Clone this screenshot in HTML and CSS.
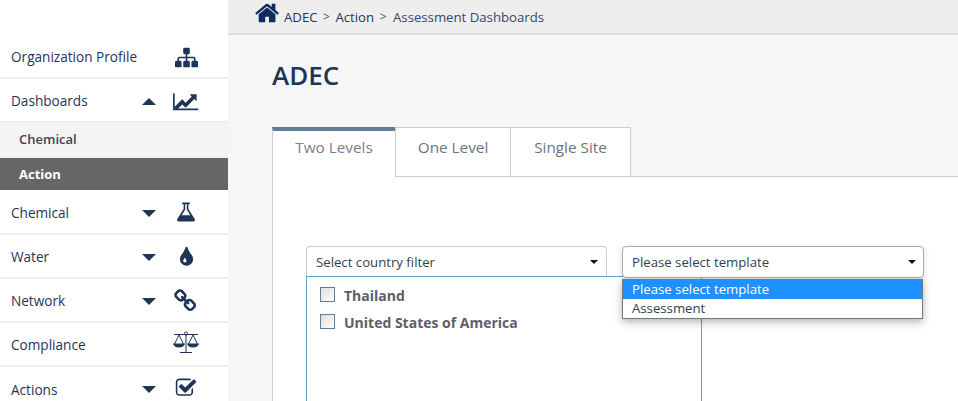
FILE: index.html
```html
<!DOCTYPE html>
<html lang="en">
<head>
  <meta charset="UTF-8" />
  <title>Assessment Dashboards - ADEC</title>
  <link rel="stylesheet" href="styles.css">
</head>
<body>

<div class="sidebar">
  <div class="side-row">
    <span class="side-label">Organization Profile</span>
    <span class="caret"></span>
    <span class="side-icon"><svg width="23" height="23" viewBox="0 0 1792 1792"><path d="M1792 1248v320q0 40-28 68t-68 28h-320q-40 0-68-28t-28-68v-320q0-40 28-68t68-28h96v-192h-512v192h96q40 0 68 28t28 68v320q0 40-28 68t-68 28h-320q-40 0-68-28t-28-68v-320q0-40 28-68t68-28h96v-192h-512v192h96q40 0 68 28t28 68v320q0 40-28 68t-68 28h-320q-40 0-68-28t-28-68v-320q0-40 28-68t68-28h96v-192q0-52 38-90t90-38h512v-192h-96q-40 0-68-28t-28-68v-320q0-40 28-68t68-28h320q40 0 68 28t28 68v320q0 40-28 68t-68 28h-96v192h512q52 0 90 38t38 90v192h96q40 0 68 28t28 68z"/></svg></span>
  </div>
  <div class="side-row">
    <span class="side-label">Dashboards</span>
    <span class="caret caret-up"></span>
    <span class="side-icon"><svg width="27" height="24" viewBox="0 0 2048 1792"><path d="M1920 1472v128h-1920v-1280h128v1152h1792zm-128-1056v435q0 21-19.500 29.500t-35.500-7.500l-121-121-633 633q-10 10-23 10t-23-10l-233-233-416 416-192-192 585-585q10-10 23-10t23 10l233 233 464-464-121-121q-16-16-7.500-35.500t29.500-19.500h435q14 0 23 9t9 23z"/></svg></span>
  </div>
  <div class="sub-row">Chemical</div>
  <div class="sub-row sub-active">Action</div>
  <div class="side-row">
    <span class="side-label">Chemical</span>
    <span class="caret caret-down"></span>
    <span class="side-icon icon-up2"><svg width="22" height="22" viewBox="0 0 1792 1792"><path d="M1591 1448q56 89 21.500 152.500t-140.500 63.500h-1152q-106 0-140.500-63.500t21.500-152.500l503-793v-399h-64q-26 0-45-19t-19-45 19-45 45-19h512q26 0 45 19t19 45-19 45-45 19h-64v399zm-779-725l-272 429h712l-272-429-20-31v-436h-128v436z"/></svg></span>
  </div>
  <div class="side-row">
    <span class="side-label">Water</span>
    <span class="caret caret-down"></span>
    <span class="side-icon"><svg width="23" height="23" viewBox="0 0 1792 1792"><path d="M896 1152q0-36-20-69-1-1-15.500-22.500t-25.500-38-25-44-21-50.500q-4-16-21-16t-21 16q-7 23-21 50.500t-25 44-25.500 38-15.500 22.500q-20 33-20 69 0 53 37.500 90.500t90.500 37.500 90.500-37.500 37.500-90.500zm512-128q0 212-150 362t-362 150-362-150-150-362q0-145 81-275 6-9 62.500-90.500t101-151 99.500-178 83-201.500q9-30 34-47t51-17 51.500 17 33.500 47q28 93 83 201.500t99.500 178 101 151 62.500 90.500q81 127 81 275z"/></svg></span>
  </div>
  <div class="side-row">
    <span class="side-label">Network</span>
    <span class="caret caret-down"></span>
    <span class="side-icon"><svg width="24" height="24" viewBox="0 0 1792 1792"><path d="M1456 1216q0-40-28-68l-208-208q-28-28-68-28-42 0-72 32 3 3 19 18.500t21.500 21.500 15 19 13 25.500 3.500 27.500q0 40-28 68t-68 28q-15 0-27.500-3.500t-25.500-13-19-15-21.500-21.500-18.500-19q-33 31-33 73 0 40 28 68l206 207q27 27 68 27 40 0 68-26l147-146q28-28 28-67zm-703-705q0-40-28-68l-206-207q-28-28-68-28-39 0-68 27l-147 146q-28 28-28 67 0 40 28 68l208 208q27 27 68 27 42 0 72-31-3-3-19-18.500t-21.500-21.500-15-19-13-25.500-3.500-27.500q0-40 28-68t68-28q15 0 27.500 3.500t25.500 13 19 15 21.500 21.500 18.500 19q33-31 33-73zm895 705q0 120-85 203l-147 146q-83 83-203 83-121 0-204-85l-206-207q-83-83-83-203 0-123 88-209l-88-88q-86 88-208 88-120 0-204-84l-208-208q-84-84-84-204t85-203l147-146q83-83 203-83 121 0 204 85l206 207q83 83 83 203 0 123-88 209l88 88q86-88 208-88 120 0 204 84l208 208q84 84 84 204z"/></svg></span>
  </div>
  <div class="side-row">
    <span class="side-label">Compliance</span>
    <span class="caret"></span>
    <span class="side-icon icon-up"><svg width="28" height="23" viewBox="0 0 28 23"><path class="thin" d="M14 3v18M8 21.500h12M2 3.500h24M7 4L2.500 13M7 4l4.500 9M21 4l-4.500 9M21 4l4.500 9"/><circle class="thin" cx="14" cy="2.500" r="1.500" fill="white"/><path d="M1 12.500h12q-1 4-6 4t-6-4zM15 12.500h12q-1 4-6 4t-6-4z"/></svg></span>
  </div>
  <div class="side-row side-last">
    <span class="side-label">Actions</span>
    <span class="caret caret-down"></span>
    <span class="side-icon"><svg width="22" height="22" viewBox="0 0 1792 1792"><path d="M1472 930v318q0 119-84.500 203.500t-203.500 84.500h-832q-119 0-203.500-84.500t-84.500-203.500v-832q0-119 84.500-203.500t203.500-84.500h832q63 0 117 25 15 7 18 23 3 17-9 29l-49 49q-10 10-23 10-3 0-9-2-23-6-45-6h-832q-66 0-113 47t-47 113v832q0 66 47 113t113 47h832q66 0 113-47t47-113v-254q0-13 9-22l64-64q10-10 23-10 6 0 12 3 20 8 20 29zm231-489l-814 814q-24 24-57 24t-57-24l-430-430q-24-24-24-57t24-57l110-110q24-24 57-24t57 24l263 263 647-647q24-24 57-24t57 24l110 110q24 24 24 57t-24 57z"/></svg></span>
  </div>
</div>

<div class="main">
  <div class="crumbs">
    <svg class="home" width="26" height="26" viewBox="0 0 1792 1792"><path d="M1408 992v480q0 26-19 45t-45 19h-384v-384h-256v384h-384q-26 0-45-19t-19-45v-480q0-1 .5-3t.5-3l575-474 575 474q1 2 1 6zm223-69l-62 74q-8 9-21 11h-3q-13 0-21-7l-692-577-692 577q-12 8-24 7-13-2-21-11l-62-74q-8-10-7-23.500t11-21.500l719-599q32-26 76-26t76 26l244 204v-195q0-14 9-23t23-9h192q14 0 23 9t9 23v408l219 182q10 8 11 21.500t-7 23.500z"/></svg>
    <span>ADEC</span>
    <span class="sep">&gt;</span>
    <span>Action</span>
    <span class="sep">&gt;</span>
    <span class="crumb-last">Assessment Dashboards</span>
  </div>

  <h1 class="title">ADEC</h1>

  <div class="tabs">
    <div class="tab tab-active">Two Levels</div>
    <div class="tab tab-two">One Level</div>
    <div class="tab tab-three">Single Site</div>
  </div>

  <div class="panel">
    <div class="filters">
      <div class="select select-country">
        <span>Select country filter</span>
        <span class="select-arrow"></span>
      </div>
      <div class="select select-template">
        <span>Please select template</span>
        <span class="select-arrow"></span>
        <ul class="options">
          <li class="option-on">Please select template</li>
          <li>Assessment</li>
        </ul>
      </div>
    </div>
    <div class="country-list">
      <label class="country"><span class="check"></span>Thailand</label>
      <label class="country"><span class="check"></span>United States of America</label>
    </div>
  </div>
</div>

</body>
</html>
```

FILE: styles.css
```css
html, body {
  height: 100%;
}

body {
  margin: 0;
  display: flex;
  height: 401px;
  overflow: hidden;
  font-family: "Open Sans", Arial, sans-serif;
  font-size: 13.600px;
  color: #1f3557;
  background: #f6f6f6;
}

.sidebar {
  box-sizing: border-box;
  width: 228px;
  height: 401px;
  flex: none;
  padding-top: 35px;
  overflow: hidden;
  background: white;
}

.side-row {
  display: flex;
  align-items: center;
  box-sizing: border-box;
  height: 44px;
  padding: 2px 0 0 11px;
  border-bottom: 2px solid #eeeeee;
}

/* last row is cut by the window, keep its text on the same line as the others */
.side-last {
  height: 34px;
  padding-top: 0;
  align-items: flex-start;
  border-bottom: none;
}

.side-last .side-label {
  margin-bottom: 0;
  padding-top: 13px;
}

.side-last .caret {
  margin-top: 19px;
}

.side-last .side-icon {
  padding-top: 10px;
}

.side-label {
  flex: 1;
  margin-bottom: 2px;
}

.caret {
  width: 0;
  height: 0;
  margin-right: 16px;
  border-left: 7px solid transparent;
  border-right: 7px solid transparent;
}

.caret-up {
  border-bottom: 7px solid #1f3557;
}

.caret-down {
  border-top: 7px solid #1f3557;
}

.side-icon {
  display: flex;
  justify-content: center;
  width: 28px;
  margin-right: 28px;
}

.side-icon svg {
  fill: #1f3557;
}

.icon-up {
  margin-top: -5px;
}

.icon-up2 {
  margin-top: -2px;
}

.thin {
  fill: none;
  stroke: #1f3557;
  stroke-width: 1;
}

.sub-row {
  height: 34px;
  line-height: 33px;
  padding-left: 19px;
  background: #f4f4f4;
  border-bottom: 1px solid #eeeeee;
  font-size: 13px;
  font-weight: 600;
  color: #3d4650;
}

.sub-active {
  height: 32px;
  line-height: 32px;
  margin-bottom: 1px;
  background: #666666;
  color: white;
  font-weight: 700;
  border-bottom: none;
}

.main {
  flex: 1;
  min-width: 0;
}

.crumbs {
  display: flex;
  align-items: center;
  gap: 5.500px;
  height: 33px;
  padding-left: 27px;
  background: #eeeeee;
  border-bottom: 2px solid #dddddd;
  font-size: 13.200px;
}

.home {
  fill: #0f2b5c;
  margin-top: -7px;
  margin-right: -2.500px;
}

.sep {
  font-size: 12px;
  color: #555555;
}

.crumb-last {
  margin-left: 1px;
  color: #3a4666;
}

.title {
  margin: 0;
  padding: 22px 0 0 44px;
  height: 70px;
  font-size: 26px;
  font-weight: 600;
  line-height: 36px;
  color: #1f3557;
}

.tabs {
  display: flex;
  margin-left: 44px;
  height: 50px;
  border-bottom: 1px solid #cccccc;
  box-sizing: border-box;
}

.tab {
  box-sizing: border-box;
  height: 50px;
  padding-top: 9px;
  text-align: center;
  font-size: 15.300px;
  color: #6b7480;
  background: white;
  border: 1px solid #cccccc;
  border-left: none;
}

.tab-active {
  width: 123px;
  height: 51px;
  border-left: 1px solid #cccccc;
  border-top: 4px solid #5f7d99;
  border-right: none;
  border-bottom: none;
  padding-top: 6px;
  color: #78808c;
}

.tab-two {
  width: 116px;
  border-left: 1px solid #cccccc;
}

.tab-three {
  width: 120px;
}

.panel {
  height: 224px;
  margin-left: 44px;
  padding: 69px 0 0 33px;
  box-sizing: border-box;
  background: white;
  border-left: 1px solid #cccccc;
}

.filters {
  display: flex;
  gap: 15px;
}

.select {
  display: flex;
  align-items: center;
  justify-content: space-between;
  box-sizing: border-box;
  height: 32px;
  padding: 0 10px 0 9px;
  background: white;
  border: 1px solid #cccccc;
  border-radius: 4px;
  font-size: 13.200px;
  color: #333f4d;
}

.select-country {
  width: 301px;
  padding-bottom: 1px;
  border-bottom: none;
  border-radius: 4px 4px 0 0;
}

.select-template {
  position: relative;
  width: 302px;
  z-index: 2;
  border-color: #aaaaaa;
  box-shadow: 0 2px 6px rgba(0,0,0,0.15);
}

.select-arrow {
  width: 0;
  height: 0;
  margin-right: -2px;
  border-left: 4px solid transparent;
  border-right: 4px solid transparent;
  border-top: 4px solid #111111;
}

.select-template .select-arrow {
  margin-right: -3px;
}

.options {
  position: absolute;
  top: 32px;
  left: -1px;
  width: 301px;
  margin: 0;
  padding: 0;
  box-sizing: border-box;
  list-style: none;
  background: white;
  border: 1px solid #777777;
  box-shadow: 0 3px 8px rgba(0,0,0,0.3);
}

.options li {
  height: 19px;
  line-height: 19px;
  padding-left: 9px;
}

.options .option-on {
  background: #1e90ff;
  color: white;
}

.country-list {
  position: relative;
  width: 396px;
  height: 125px;
  margin-top: -2px;
  padding-top: 5px;
  box-sizing: border-box;
  background: white;
  border: 1px solid #5ba3c9;
  border-bottom: none;
}

.country {
  display: flex;
  align-items: center;
  height: 27px;
  padding-left: 13px;
  font-size: 14px;
  font-weight: 700;
  color: #5c6068;
}

.check {
  box-sizing: border-box;
  width: 15px;
  height: 15px;
  margin-right: 9px;
  margin-top: -3px;
  border: 1px solid #5f7d99;
  background: linear-gradient(135deg, #dddddd, #ffffff);
}
```
